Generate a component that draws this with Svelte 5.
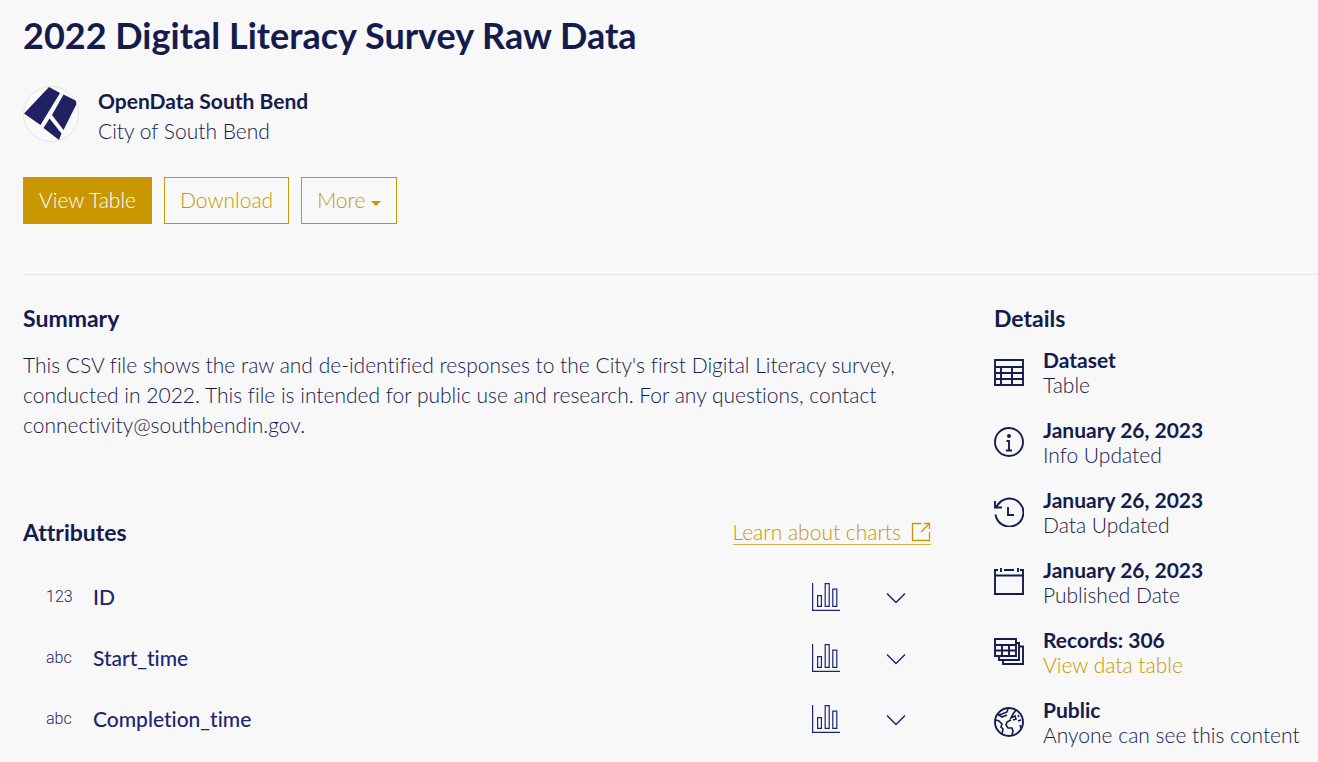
<script>
  const attributes = [
    { name: 'ID', type: '123' },
    { name: 'Start_time', type: 'abc' },
    { name: 'Completion_time', type: 'abc' }
  ];
  const details = [
    { icon: 'table', title: 'Dataset', text: 'Table' },
    { icon: 'info', title: 'January 26, 2023', text: 'Info Updated' },
    { icon: 'history', title: 'January 26, 2023', text: 'Data Updated' },
    { icon: 'calendar', title: 'January 26, 2023', text: 'Published Date' },
    { icon: 'records', title: 'Records: 306', text: 'View data table', link: true },
    { icon: 'globe', title: 'Public', text: 'Anyone can see this content' }
  ];
</script>

<main>
  <header>
    <h1>2022 Digital Literacy Survey Raw Data</h1>
    <div class="owner">
      <svg class="logo" viewBox="0 0 56 56" aria-hidden="true">
        <circle cx="28" cy="28" r="27.5" fill="#fafafa" stroke="#e4e4ea" />
        <g fill="#1f2160">
          <path d="M26 1 37 7 17.500 39 1 27.500Z" />
          <path d="M40.500 8.500 52.500 14.500Q54 16 53 19L40.500 44 29 29Z" />
          <path d="M26.500 32.500 38.500 47.500 36 54 20.500 42Z" />
        </g>
      </svg>
      <div class="owner-text">
        <strong>OpenData South Bend</strong>
        <span>City of South Bend</span>
      </div>
    </div>
    <div class="actions">
      <button class="primary">View Table</button>
      <button>Download</button>
      <button>More <span class="caret"></span></button>
    </div>
  </header>

  <div class="columns">
    <div class="content">
      <section>
        <h2>Summary</h2>
        <p>This CSV file shows the raw and de-identified responses to the City's first Digital Literacy survey, conducted in 2022. This file is intended for public use and research. For any questions, contact connectivity@southbendin.gov.</p>
      </section>
      <section class="attributes">
        <div class="attributes-head">
          <h2>Attributes</h2>
          <a class="learn" href="#charts">
            Learn about charts
            <svg width="20" height="20" viewBox="0 0 20 20" fill="none" stroke="currentColor" stroke-width="1.3" aria-hidden="true">
              <path d="M10.500 1.500H1.500V18.500H18.500V10M10 10 18 2M13 1.500H18.500V7" />
            </svg>
          </a>
        </div>
        <ul class="rows">
          {#each attributes as attribute}
            <li>
              <span class="type">{attribute.type}</span>
              <span class="name">{attribute.name}</span>
              <button class="icon" aria-label="Chart of {attribute.name}">
                <svg width="28" height="28" viewBox="0 0 28 28" fill="none" stroke="currentColor" stroke-width="1.2" aria-hidden="true">
                  <path d="M.6 0V27.400H28M5.600 12.600H9.400V23.400H5.600ZM13.200 .6H17.200V23.400H13.200ZM20.800 6.200H24.800V23.400H20.800Z" />
                </svg>
              </button>
              <button class="icon" aria-label="Expand {attribute.name}">
                <svg width="20" height="28" viewBox="0 0 20 28" fill="none" stroke="currentColor" stroke-width="1.5" aria-hidden="true">
                  <path d="M1 10.500 10 19.500 19 10.500" />
                </svg>
              </button>
            </li>
          {/each}
        </ul>
      </section>
    </div>

    <aside>
      <h2>Details</h2>
      <ul class="details">
        {#each details as item}
          <li>
            <svg width="30" height="30" viewBox="0 0 30 30" fill="none" stroke="currentColor" stroke-width="1.9" aria-hidden="true">
              {#if item.icon === 'table'}
                <path d="M1 3H29V28H1ZM1 10H29M1 16H29M1 22H29M7 10V28M18 10V28" />
              {:else if item.icon === 'info'}
                <circle cx="15" cy="15" r="14" />
                <circle cx="15" cy="9" r="2" fill="currentColor" stroke="none" />
                <path d="M12.500 14H15V23M12 23.500H18" />
              {:else if item.icon === 'history'}
                <path d="M3 9A14 14 0 1 1 1.500 17.500M1 4V10.500H8M1.500 10 6.500 5M14 10V18H20" />
              {:else if item.icon === 'calendar'}
                <path d="M4 3H1V27H29V3H26M10 3H20M1 8.500H29M7 1V5M24 1V5" />
              {:else if item.icon === 'records'}
                <path d="M1 2H22V19H1ZM1 8H22M1 13.500H22M8 8V19M15 8V19M22 6H25V23H5V19M25 9.500H29V27H9V23" />
              {:else}
                <circle cx="15" cy="15" r="14" />
                <path stroke-width="1.6" d="M3.500 8 8 7 13 5 14 2M5 8 8 10 13 8M1.500 13 5 14 8 17 7 20 9 22 8 27M22 3 19 7 17 11 21 9 22 12 19 13M17 13 13 15 12 18 14 21 18 21 19 24 18 28M24 14 27 13M24 8 25 10M26 18 27 21" />
              {/if}
            </svg>
            <div>
              <strong>{item.title}</strong>
              {#if item.link}<a href="#data">{item.text}</a>{:else}<span>{item.text}</span>{/if}
            </div>
          </li>
        {/each}
      </ul>
    </aside>
  </div>
</main>

<style>
  :global(body) {
    margin: 0;
    background: #f8f8f8;
  }
  main {
    padding: 12px 0 0 23px;
    color: #141b4d;
    font: 300 21px/30px Lato, sans-serif;
    font-variant-ligatures: none;
  }
  h1, h2, p, ul {
    margin: 0;
    padding: 0;
  }
  ul {
    list-style: none;
  }
  strong {
    font-weight: 700;
  }
  h1 {
    font-size: 36px;
    line-height: 46px;
    font-weight: 700;
  }
  h2 {
    font-size: 23px;
    line-height: 30px;
    font-weight: 700;
  }
  header {
    padding-bottom: 50px;
    border-bottom: 1px solid #e6e6e6;
  }
  .owner {
    display: flex;
    align-items: flex-start;
    gap: 19px;
    margin-top: 28px;
  }
  .logo {
    width: 56px;
    height: 56px;
  }
  .owner-text {
    display: flex;
    flex-direction: column;
  }
  .actions {
    display: flex;
    gap: 12px;
    margin-top: 31px;
  }
  button {
    font: inherit;
    cursor: pointer;
  }
  .actions button {
    height: 47px;
    padding: 0 15px 2px;
    border: 1px solid #c99700;
    background: transparent;
    color: #c99700;
  }
  .actions .primary {
    background: #c99700;
    color: #fff;
  }
  .caret {
    display: inline-block;
    border: 5px solid transparent;
    border-top-color: currentColor;
    border-bottom: 0;
    vertical-align: 2px;
  }
  .columns {
    display: grid;
    grid-template-columns: minmax(0, 1fr) 324px;
    gap: 63px;
    padding-top: 28px;
  }
  p {
    margin-top: 17px;
  }
  .attributes {
    margin-top: 77px;
  }
  .attributes-head {
    display: flex;
    align-items: center;
    justify-content: space-between;
  }
  a {
    color: #c99700;
    text-decoration: none;
  }
  .learn {
    display: flex;
    align-items: center;
    gap: 10px;
    line-height: 24px;
    border-bottom: 1px solid #d8b344;
  }
  .rows {
    margin-top: 19px;
    color: #1d2570;
  }
  .rows li {
    display: flex;
    align-items: center;
    height: 61px;
    padding: 0 25px 0 23px;
  }
  .type {
    width: 47px;
    font: 300 16px/30px Roboto, sans-serif;
  }
  .name {
    flex: 1;
    font-weight: 500;
  }
  .icon {
    display: flex;
    padding: 0;
    margin-left: 46px;
    border: 0;
    background: none;
    color: inherit;
  }
  .details {
    display: grid;
    gap: 20px;
    margin-top: 14px;
  }
  .details li {
    display: flex;
    align-items: center;
    gap: 19px;
    line-height: 25px;
  }
  .details div {
    display: flex;
    flex-direction: column;
  }
</style>
